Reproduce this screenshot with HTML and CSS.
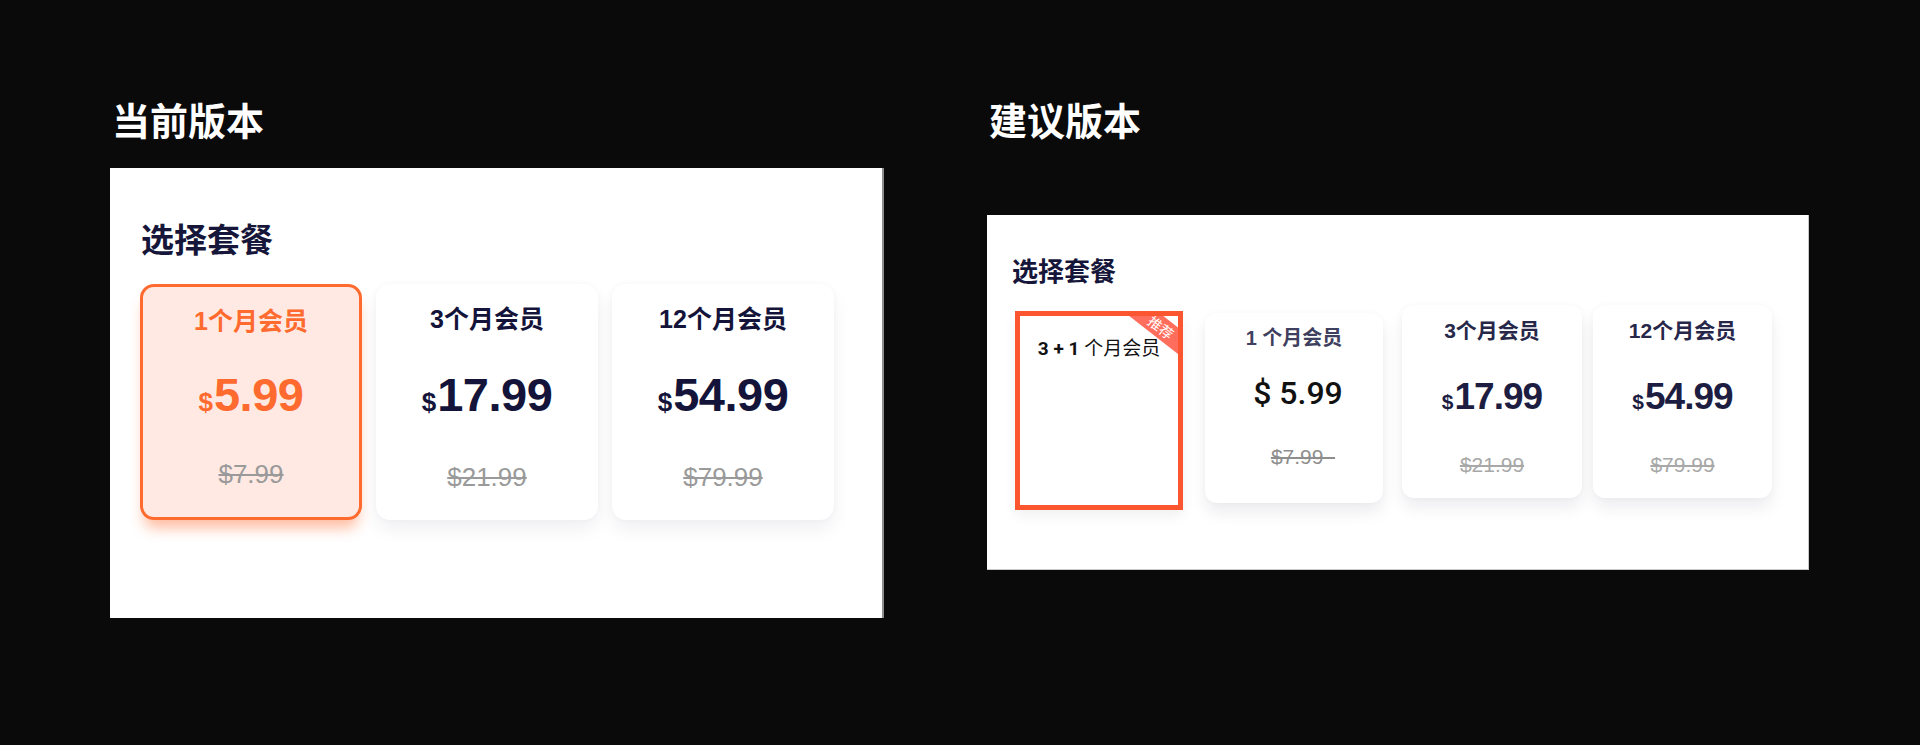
FILE: index.html
```html
<!DOCTYPE html>
<html lang="zh-CN">
<head>
<meta charset="utf-8">
<title>套餐对比</title>
<link rel="stylesheet" href="styles.css">
</head>
<body>
<main class="stage">
  <section class="version version--current">
    <h1 class="version-title">当前版本</h1>
    <div class="panel panel--current">
      <h2 class="panel-heading">选择套餐</h2>
      <div class="plans">
        <div class="plan plan--selected">
          <div class="plan-label">1个月会员</div>
          <div class="plan-price"><span class="cur">$</span>5.99</div>
          <div class="plan-old">$7.99</div>
        </div>
        <div class="plan">
          <div class="plan-label">3个月会员</div>
          <div class="plan-price"><span class="cur">$</span>17.99</div>
          <div class="plan-old">$21.99</div>
        </div>
        <div class="plan">
          <div class="plan-label">12个月会员</div>
          <div class="plan-price"><span class="cur">$</span>54.99</div>
          <div class="plan-old">$79.99</div>
        </div>
      </div>
    </div>
  </section>

  <section class="version version--proposed">
    <h1 class="version-title">建议版本</h1>
    <div class="panel panel--proposed">
      <h2 class="panel-heading panel-heading--small">选择套餐</h2>
      <div class="offers">
        <div class="offer offer--trial">
          <span class="ribbon">推荐</span>
          <div class="offer-trial-label"><b>3 + 1</b> 个月会员</div>
        </div>
        <div class="offer offer--one">
          <div class="offer-label">1 个月会员</div>
          <div class="offer-price-plain">$ 5.99</div>
          <div class="offer-old"><s>$7.99&nbsp;&nbsp;</s></div>
        </div>
        <div class="offer offer--three">
          <div class="offer-label">3个月会员</div>
          <div class="offer-price"><span class="cur">$</span>17.99</div>
          <div class="offer-old offer-old--light"><s>$21.99</s></div>
        </div>
        <div class="offer offer--twelve">
          <div class="offer-label">12个月会员</div>
          <div class="offer-price"><span class="cur">$</span>54.99</div>
          <div class="offer-old offer-old--light"><s>$79.99</s></div>
        </div>
      </div>
    </div>
  </section>
</main>
</body>
</html>
```

FILE: styles.css
```css
* { box-sizing: border-box; }

html, body {
  margin: 0;
  padding: 0;
}

body {
  width: 1920px;
  height: 745px;
  overflow: hidden;
  background: #0a0a0a;
  font-family: "Liberation Sans", "Noto Sans CJK SC", sans-serif;
}

.stage {
  display: flex;
  align-items: flex-start;
  gap: 103px;
  padding: 99px 0 0 110px;
}

.version {
  display: flex;
  flex-direction: column;
}

.version-title {
  margin: 0 0 29px 2px;
  font-family: "Noto Sans CJK SC", sans-serif;
  font-weight: 700;
  font-size: 38px;
  line-height: 40px;
  color: #ffffff;
}

.version--proposed .version-title {
  margin-bottom: 76px;
}

.panel {
  background: #ffffff;
}

.panel--current {
  width: 774px;
  height: 450px;
  padding: 52px 0 0 30px;
  border-right: 2px solid #8d8d8d;
}

.panel--proposed {
  width: 822px;
  height: 355px;
  padding: 40px 0 0 28px;
  border-right: 1px solid #c8c8c8;
  border-bottom: 1px solid #c8c8c8;
}

.panel-heading {
  margin: 0 0 0 1px;
  font-family: "Noto Sans CJK SC", sans-serif;
  font-weight: 700;
  font-size: 33px;
  line-height: 36px;
  color: #16163a;
}

.panel-heading--small {
  margin-left: -3px;
  font-size: 26px;
  line-height: 30px;
}

/* ---------- current version ---------- */

.plans {
  display: flex;
  gap: 14px;
  margin-top: 28px;
}

.plan {
  width: 222px;
  height: 236px;
  padding-top: 17px;
  display: flex;
  flex-direction: column;
  align-items: center;
  background: #ffffff;
  border: 3px solid transparent;
  border-radius: 14px;
  box-shadow: 0 10px 18px rgba(20, 20, 60, 0.06), 0 0 6px rgba(20, 20, 60, 0.03);
  color: #14143a;
}

.plan--selected {
  padding-top: 19px;
  background: #ffe9e2;
  border-color: #ff6a2e;
  color: #ff6a2e;
  box-shadow: 0 12px 14px -4px rgba(255, 106, 46, 0.45);
}

.plan-label {
  font-size: 25px;
  line-height: 30px;
  font-weight: 600;
}

.plan-price {
  margin-top: 38px;
  font-size: 47px;
  line-height: 46px;
  font-weight: 700;
  letter-spacing: -0.5px;
}

.plan--selected .plan-price {
  margin-top: 36px;
}

.plan-price .cur {
  font-size: 26px;
  letter-spacing: 0;
  margin-right: 1px;
}

.plan-old {
  margin-top: 37px;
  font-size: 26px;
  line-height: 30px;
  color: #9a9a9a;
  text-decoration: line-through;
}

.plan--selected .plan-old {
  margin-top: 34px;
}

/* ---------- proposed version ---------- */

.offers {
  display: flex;
  align-items: flex-start;
  margin-top: 20px;
}

.offer {
  display: flex;
  flex-direction: column;
  align-items: center;
  background: #ffffff;
  border-radius: 12px;
  box-shadow: 0 10px 16px rgba(20, 20, 50, 0.07), 0 0 6px rgba(20, 20, 50, 0.03);
}

.offer--trial {
  position: relative;
  overflow: hidden;
  width: 168px;
  height: 199px;
  margin-top: 6px;
  padding-top: 22px;
  border: 5px solid #fb5630;
  border-radius: 0;
  box-shadow: 0 6px 12px rgba(0, 0, 0, 0.06);
}

.ribbon {
  position: absolute;
  left: 93px;
  top: 1px;
  width: 96px;
  height: 21px;
  background: #ff6d5d;
  color: #ffffff;
  font-family: "Noto Sans CJK SC", sans-serif;
  font-size: 14px;
  line-height: 21px;
  text-align: center;
  transform: rotate(38deg);
}

.offer-trial-label {
  font-family: Roboto, "Noto Sans CJK SC", sans-serif;
  font-size: 19px;
  line-height: 22px;
  color: #111111;
}

.offer-trial-label b {
  font-weight: 700;
}

.offer--one {
  width: 178px;
  height: 190px;
  margin-top: 8px;
  margin-left: 22px;
  padding-top: 13px;
}

.offer--three {
  width: 180px;
  height: 193px;
  margin-left: 19px;
  padding-top: 14px;
}

.offer--twelve {
  width: 179px;
  height: 193px;
  margin-left: 11px;
  padding-top: 14px;
}

.offer-label {
  font-size: 21px;
  line-height: 24px;
  font-weight: 700;
  color: #27274a;
}

.offer--one .offer-label {
  font-size: 20px;
  color: #3f3f60;
}

.offer-price-plain {
  margin-top: 27px;
  margin-left: 8px;
  font-family: Roboto, sans-serif;
  font-weight: 500;
  font-size: 32px;
  line-height: 32px;
  color: #111111;
}

.offer-price {
  margin-top: 35px;
  font-size: 37px;
  line-height: 37px;
  font-weight: 700;
  letter-spacing: -1px;
  color: #1d1d42;
}

.offer-price .cur {
  font-size: 21px;
  letter-spacing: 0;
  margin-right: 1px;
}

.offer-old {
  margin-top: 36px;
  font-size: 21px;
  line-height: 24px;
  color: #8e8e8e;
}

.offer--one .offer-old {
  margin-left: 18px;
}

.offer-old--light {
  margin-top: 33px;
  color: #a8a8a8;
}
```
